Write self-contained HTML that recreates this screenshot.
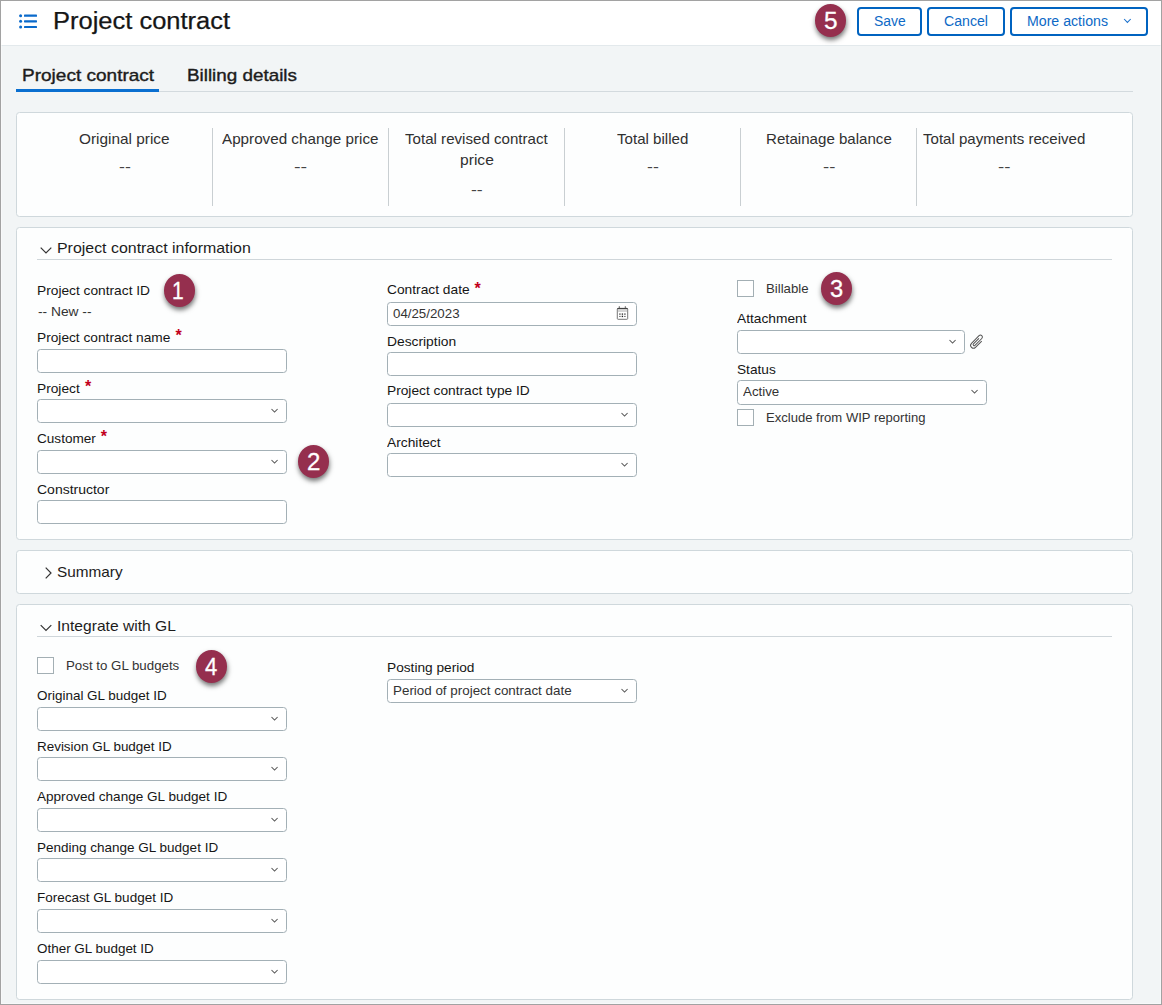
<!DOCTYPE html><html lang="en"><head><meta charset="utf-8"><title>Project contract</title><style>
*{box-sizing:border-box;margin:0;padding:0}
html,body{width:1162px;height:1005px;overflow:hidden;background:#f2f5f6}
body{font-family:"Liberation Sans",sans-serif;color:#161616;position:relative;font-size:13px}
.abs{position:absolute}
#frame{position:absolute;left:0;top:0;width:1162px;height:1005px;border:1px solid #a2a2a2;z-index:50}
#frame2{position:absolute;left:1px;top:1px;width:1160px;height:1003px;border:1px solid rgba(255,255,255,.45);z-index:49}
#hdr{position:absolute;left:0;top:0;width:1162px;height:46px;background:#fff;border-bottom:1px solid #e3e9ec}
.t{position:absolute;white-space:nowrap;transform-origin:0 50%;line-height:20px}
.title{font-size:23.3px;color:#161616;-webkit-text-stroke:0.25px #161616}
.bt{font-size:14px;color:#0d69c6}
.tab{font-size:17px;color:#1c1c1c;-webkit-text-stroke:0.38px #1c1c1c}
.sl{font-size:14.6px;color:#303030}
.sv{font-size:15px;color:#444}
.sh{font-size:15px;color:#1c1c1c}
.lb{font-size:13px;color:#161616}
.tx{font-size:13px;color:#333}
.cl{font-size:12.8px;color:#333}
.iv{font-size:13px;color:#333}
.btn{position:absolute;top:7px;height:29px;border:2px solid #0063c0;border-radius:4px;background:#fff}
.badge{position:absolute;width:31px;height:32.7px;border-radius:50%;background:#952f4e;box-shadow:0.5px 3px 5px rgba(0,0,0,.55)}
.bd{font-size:23px;color:#fff;-webkit-text-stroke:0.3px #fff;z-index:3}
.card{position:absolute;left:16px;width:1117px;background:#fdfefe;border:1px solid #cfd8dc;border-radius:3.5px}
.div{position:absolute;width:1px;top:128px;height:78px;background:#c9cfd2}
.hl{position:absolute;left:37px;width:1075px;height:1px;background:#cfd6da}
.req{position:absolute;color:#c2001c;font-size:16px;font-weight:bold;line-height:16px}
.inp{position:absolute;height:24px;border:1px solid #a3b0b6;border-radius:3.5px;background:#fff}
.cb{position:absolute;width:17px;height:17px;border:1px solid #a3afb4;background:#fff}
svg{position:absolute;overflow:visible}
</style></head><body>
<div id="hdr"></div>
<svg style="left:19px;top:14px" width="18" height="15" viewBox="0 0 18 15"><g fill="#0a6acb"><circle cx="1.6" cy="1.7" r="1.5"/><circle cx="1.6" cy="7.35" r="1.5"/><circle cx="1.6" cy="13" r="1.5"/><rect x="5" y="0.6" width="13" height="2.2" rx=".6"/><rect x="5" y="6.25" width="13" height="2.2" rx=".6"/><rect x="5" y="11.9" width="13" height="2.2" rx=".6"/></g></svg>
<div id="title" class="t title" style="left:53.00px;top:11.00px;transform:scaleX(1.0942)">Project contract</div>
<div class="badge" style="left:815.0px;top:4.0px"></div>
<div id="bd5" class="t bd" style="left:824.00px;top:11.00px;transform:scaleX(1.0608)">5</div>
<div class="btn" style="left:857px;width:65px"></div>
<div class="btn" style="left:927px;width:78px"></div>
<div class="btn" style="left:1010px;width:138px"></div>
<div id="b_save" class="t bt" style="left:874.00px;top:11.00px;transform:scaleX(0.9908)">Save</div>
<div id="b_cancel" class="t bt" style="left:944.00px;top:11.00px;transform:scaleX(1.0077)">Cancel</div>
<div id="b_more" class="t bt" style="left:1027.00px;top:11.00px;transform:scaleX(1.0104)">More actions</div>
<svg style="left:1123px;top:18px" width="9" height="6" viewBox="0 0 9 6"><path d="M1.1 1 L4.4 4.4 L7.7 1" fill="none" stroke="#1a70cc" stroke-width="1.05"/></svg>
<div id="tab1" class="t tab" style="left:22.00px;top:66.00px;transform:scaleX(1.1188)">Project contract</div>
<div id="tab2" class="t tab" style="left:187.00px;top:66.00px;transform:scaleX(1.1082)">Billing details</div>
<div class="abs" style="left:16px;top:91px;width:1117px;height:1px;background:#d3dade"></div>
<div class="abs" style="left:16px;top:89px;width:143px;height:3px;background:#0a6fd0"></div>
<div class="card" style="top:112px;height:105px"></div>
<div id="s0" class="t sl" style="left:79.00px;top:129.00px;transform:scaleX(1.0530)">Original price</div>
<div id="d0" class="t sv" style="left:119.00px;top:157.00px;transform:scaleX(1.1837)">--</div>
<div id="s1" class="t sl" style="left:222.00px;top:129.00px;transform:scaleX(1.0425)">Approved change price</div>
<div id="d1" class="t sv" style="left:294.00px;top:157.00px;transform:scaleX(1.3188)">--</div>
<div class="div" style="left:212px"></div>
<div id="s2a" class="t sl" style="left:405.00px;top:129.00px;transform:scaleX(1.0351)">Total revised contract</div>
<div id="s2b" class="t sl" style="left:460.00px;top:150.00px;transform:scaleX(1.0697)">price</div>
<div id="d2" class="t sv" style="left:471.00px;top:180.00px;transform:scaleX(1.1735)">--</div>
<div class="div" style="left:388px"></div>
<div id="s3" class="t sl" style="left:617.00px;top:129.00px;transform:scaleX(1.0351)">Total billed</div>
<div id="d3" class="t sv" style="left:647.00px;top:157.00px;transform:scaleX(1.1767)">--</div>
<div class="div" style="left:564px"></div>
<div id="s4" class="t sl" style="left:766.00px;top:129.00px;transform:scaleX(1.0336)">Retainage balance</div>
<div id="d4" class="t sv" style="left:823.00px;top:157.00px;transform:scaleX(1.2366)">--</div>
<div class="div" style="left:740px"></div>
<div id="s5" class="t sl" style="left:923.00px;top:129.00px;transform:scaleX(1.0318)">Total payments received</div>
<div id="d5" class="t sv" style="left:998.00px;top:157.00px;transform:scaleX(1.2439)">--</div>
<div class="div" style="left:916px"></div>
<div class="card" style="top:227px;height:313px"></div>
<svg style="left:40px;top:247px" width="12" height="8" viewBox="0 0 12 8"><path transform="translate(0 0)" d="M0.7 0.7 L6 6 L11.3 0.7" fill="none" stroke="#333" stroke-width="1.2"/></svg>
<div id="sh1" class="t sh" style="left:57.00px;top:238.00px;transform:scaleX(1.0613)">Project contract information</div>
<div class="hl" style="top:259px"></div>
<div id="l_pcid" class="t lb" style="left:37.00px;top:281.00px;transform:scaleX(1.0569)">Project contract ID</div>
<div class="badge" style="left:163.9px;top:274.0px"></div>
<div id="bd1" class="t bd" style="left:172.00px;top:281.00px;transform:scaleX(0.9135)">1</div>
<div id="t_new" class="t tx" style="left:38.00px;top:302.00px;transform:scaleX(1.0584)">-- New --</div>
<div id="l_pcn" class="t lb" style="left:37.00px;top:328.00px;transform:scaleX(1.0547)">Project contract name</div>
<div class="req" style="left:175.5px;top:328.20000000000005px">*</div>
<div class="inp" style="left:37px;top:349px;width:250px;height:24px"></div>
<div id="l_proj" class="t lb" style="left:37.00px;top:379.00px;transform:scaleX(1.0552)">Project</div>
<div class="req" style="left:85.0px;top:378.70000000000005px">*</div>
<div class="inp" style="left:37px;top:399px;width:250px;height:24px"></div>
<svg style="left:271px;top:408px" width="8" height="6" viewBox="0 0 8 6"><path d="M0.5 1.0 L3.55 4.1 L6.6 1.0" fill="none" stroke="#555" stroke-width="1.05"/></svg>
<div id="l_cust" class="t lb" style="left:37.00px;top:429.00px;transform:scaleX(1.0451)">Customer</div>
<div class="req" style="left:100.8px;top:429.20000000000005px">*</div>
<div class="inp" style="left:37px;top:450px;width:250px;height:24px"></div>
<svg style="left:271px;top:459px" width="8" height="6" viewBox="0 0 8 6"><path d="M0.5 1.0 L3.55 4.1 L6.6 1.0" fill="none" stroke="#555" stroke-width="1.05"/></svg>
<div class="badge" style="left:297.9px;top:444.90000000000003px"></div>
<div id="bd2" class="t bd" style="left:307.00px;top:452.00px;transform:scaleX(1.0450)">2</div>
<div id="l_cons" class="t lb" style="left:37.00px;top:480.00px;transform:scaleX(1.0762)">Constructor</div>
<div class="inp" style="left:37px;top:500px;width:250px;height:24px"></div>
<div id="l_cd" class="t lb" style="left:387.00px;top:280.00px;transform:scaleX(1.0585)">Contract date</div>
<div class="req" style="left:474.5px;top:280.6px">*</div>
<div class="inp" style="left:387px;top:302px;width:250px;height:24px"></div>
<div id="v_date" class="t iv" style="left:393.00px;top:304.00px;transform:scaleX(1.0224)">04/25/2023</div>
<svg style="left:616px;top:306px" width="12" height="14" viewBox="-0.4 0 12 14"><rect x="0.9" y="2.4" width="10.4" height="10.9" rx="0.8" fill="#fff" stroke="#666" stroke-width="0.9"/><path d="M1 2.6 H11.2" stroke="#444" stroke-width="1.3"/><path d="M2.9 0.2 V2.2 M8.9 0.2 V2.2" stroke="#555" stroke-width="0.9"/><rect x="1.5" y="4.3" width="9.2" height="1.4" fill="#c4c4c4"/><g fill="#666"><rect x="2.7" y="7.4" width="1.6" height="1.4"/><rect x="5.3" y="7.4" width="1.4" height="1.4" fill="#333"/><rect x="7.7" y="7.4" width="1.6" height="1.4"/><rect x="2.7" y="9.9" width="1.6" height="1"/><rect x="5.3" y="9.7" width="1.4" height="1.4" fill="#222"/><rect x="7.7" y="9.9" width="1.6" height="1"/></g></svg>
<div id="l_desc" class="t lb" style="left:387.00px;top:332.00px;transform:scaleX(1.0621)">Description</div>
<div class="inp" style="left:387px;top:352px;width:250px;height:24px"></div>
<div id="l_pct" class="t lb" style="left:387.00px;top:381.00px;transform:scaleX(1.0563)">Project contract type ID</div>
<div class="inp" style="left:387px;top:403px;width:250px;height:24px"></div>
<svg style="left:621px;top:412px" width="8" height="6" viewBox="0 0 8 6"><path d="M0.5 1.0 L3.55 4.1 L6.6 1.0" fill="none" stroke="#555" stroke-width="1.05"/></svg>
<div id="l_arch" class="t lb" style="left:387.00px;top:433.00px;transform:scaleX(1.0596)">Architect</div>
<div class="inp" style="left:387px;top:453px;width:250px;height:24px"></div>
<svg style="left:621px;top:462px" width="8" height="6" viewBox="0 0 8 6"><path d="M0.5 1.0 L3.55 4.1 L6.6 1.0" fill="none" stroke="#555" stroke-width="1.05"/></svg>
<div class="cb" style="left:737px;top:280px"></div>
<div id="c_bill" class="t cl" style="left:766.00px;top:279.00px;transform:scaleX(1.0310)">Billable</div>
<div class="badge" style="left:820.9px;top:272.20000000000005px"></div>
<div id="bd3" class="t bd" style="left:830.00px;top:279.00px;transform:scaleX(1.0303)">3</div>
<div id="l_att" class="t lb" style="left:737.00px;top:309.00px;transform:scaleX(1.0581)">Attachment</div>
<div class="inp" style="left:737px;top:330px;width:228px;height:24px"></div>
<svg style="left:949px;top:339px" width="8" height="6" viewBox="0 0 8 6"><path d="M0.5 1.0 L3.55 4.1 L6.6 1.0" fill="none" stroke="#555" stroke-width="1.05"/></svg>
<svg style="left:969px;top:334px" width="16" height="16" viewBox="0 0 16 16"><g transform="translate(8.1 7.7) rotate(45)"><path d="M2.85 -3.7 V5.1 A2.85 2.85 0 0 1 -2.85 5.1 V-5.6 A1.95 1.95 0 0 1 1.05 -5.6 V4.1 A1.05 1.05 0 0 1 -1.05 4.1 V-3.7" fill="none" stroke="#555" stroke-width="1"/></g></svg>
<div id="l_stat" class="t lb" style="left:737.00px;top:360.00px;transform:scaleX(1.0517)">Status</div>
<div class="inp" style="left:737px;top:380px;width:250px;height:25px"></div>
<svg style="left:971px;top:389px" width="8" height="6" viewBox="0 0 8 6"><path d="M0.5 1.0 L3.55 4.1 L6.6 1.0" fill="none" stroke="#555" stroke-width="1.05"/></svg>
<div id="v_act" class="t iv" style="left:743.00px;top:382.00px;transform:scaleX(1.0248)">Active</div>
<div class="cb" style="left:737px;top:409px"></div>
<div id="c_wip" class="t cl" style="left:766.00px;top:408.00px;transform:scaleX(1.0212)">Exclude from WIP reporting</div>
<div class="card" style="top:550px;height:44px"></div>
<svg style="left:44.5px;top:566.5px" width="7" height="12" viewBox="0 0 7 12"><path d="M0.7 0.7 L6 6 L0.7 11.3" fill="none" stroke="#333" stroke-width="1.2"/></svg>
<div id="sh2" class="t sh" style="left:57.00px;top:562.00px;transform:scaleX(1.0229)">Summary</div>
<div class="card" style="top:604px;height:396px"></div>
<svg style="left:40px;top:624px" width="12" height="8" viewBox="0 0 12 8"><path transform="translate(0 0.5)" d="M0.7 0.7 L6 6 L11.3 0.7" fill="none" stroke="#333" stroke-width="1.2"/></svg>
<div id="sh3" class="t sh" style="left:57.00px;top:616.00px;transform:scaleX(1.0401)">Integrate with GL</div>
<div class="hl" style="top:636px"></div>
<div class="cb" style="left:37px;top:657px"></div>
<div id="c_post" class="t cl" style="left:66.00px;top:656.00px;transform:scaleX(1.0381)">Post to GL budgets</div>
<div class="badge" style="left:195.9px;top:650.0px"></div>
<div id="bd4" class="t bd" style="left:205.00px;top:657.00px;transform:scaleX(0.9595)">4</div>
<div id="g0" class="t lb" style="left:37.00px;top:686.00px;transform:scaleX(1.0353)">Original GL budget ID</div>
<div class="inp" style="left:37px;top:707px;width:250px;height:24px"></div>
<svg style="left:271px;top:716px" width="8" height="6" viewBox="0 0 8 6"><path d="M0.5 1.0 L3.55 4.1 L6.6 1.0" fill="none" stroke="#555" stroke-width="1.05"/></svg>
<div id="g1" class="t lb" style="left:37.00px;top:737.00px;transform:scaleX(1.0334)">Revision GL budget ID</div>
<div class="inp" style="left:37px;top:757px;width:250px;height:24px"></div>
<svg style="left:271px;top:766px" width="8" height="6" viewBox="0 0 8 6"><path d="M0.5 1.0 L3.55 4.1 L6.6 1.0" fill="none" stroke="#555" stroke-width="1.05"/></svg>
<div id="g2" class="t lb" style="left:37.00px;top:787.00px;transform:scaleX(1.0429)">Approved change GL budget ID</div>
<div class="inp" style="left:37px;top:808px;width:250px;height:24px"></div>
<svg style="left:271px;top:817px" width="8" height="6" viewBox="0 0 8 6"><path d="M0.5 1.0 L3.55 4.1 L6.6 1.0" fill="none" stroke="#555" stroke-width="1.05"/></svg>
<div id="g3" class="t lb" style="left:37.00px;top:838.00px;transform:scaleX(1.0384)">Pending change GL budget ID</div>
<div class="inp" style="left:37px;top:858px;width:250px;height:24px"></div>
<svg style="left:271px;top:867px" width="8" height="6" viewBox="0 0 8 6"><path d="M0.5 1.0 L3.55 4.1 L6.6 1.0" fill="none" stroke="#555" stroke-width="1.05"/></svg>
<div id="g4" class="t lb" style="left:37.00px;top:888.00px;transform:scaleX(1.0394)">Forecast GL budget ID</div>
<div class="inp" style="left:37px;top:909px;width:250px;height:24px"></div>
<svg style="left:271px;top:918px" width="8" height="6" viewBox="0 0 8 6"><path d="M0.5 1.0 L3.55 4.1 L6.6 1.0" fill="none" stroke="#555" stroke-width="1.05"/></svg>
<div id="g5" class="t lb" style="left:37.00px;top:939.00px;transform:scaleX(1.0337)">Other GL budget ID</div>
<div class="inp" style="left:37px;top:960px;width:250px;height:24px"></div>
<svg style="left:271px;top:969px" width="8" height="6" viewBox="0 0 8 6"><path d="M0.5 1.0 L3.55 4.1 L6.6 1.0" fill="none" stroke="#555" stroke-width="1.05"/></svg>
<div id="l_pp" class="t lb" style="left:387.00px;top:658.00px;transform:scaleX(1.0526)">Posting period</div>
<div class="inp" style="left:387px;top:679px;width:250px;height:24px"></div>
<svg style="left:621px;top:688px" width="8" height="6" viewBox="0 0 8 6"><path d="M0.5 1.0 L3.55 4.1 L6.6 1.0" fill="none" stroke="#555" stroke-width="1.05"/></svg>
<div id="v_pp" class="t iv" style="left:393.00px;top:681.00px;transform:scaleX(1.0299)">Period of project contract date</div>
<div id="frame2"></div><div id="frame"></div>
</body></html>
